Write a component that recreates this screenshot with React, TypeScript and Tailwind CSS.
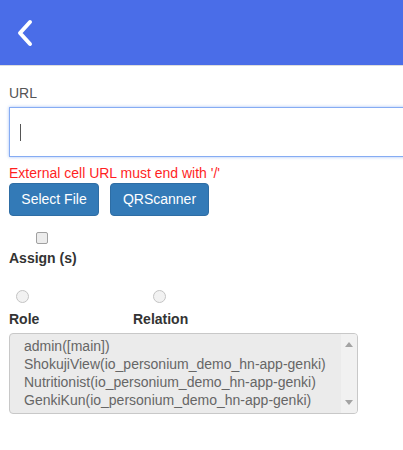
import React from 'react';

const roles = [
    'admin([main])',
    'ShokujiView(io_personium_demo_hn-app-genki)',
    'Nutritionist(io_personium_demo_hn-app-genki)',
    'GenkiKun(io_personium_demo_hn-app-genki)',
];

export default function App() {
    return (
        <div className="w-[403px] h-[450px] overflow-hidden bg-white font-['Liberation_Sans',Arial,sans-serif] text-[14px] text-[#333]">
            <div className="h-[66px] bg-[#4a6de8] border-b border-[#dddddd] flex items-center pl-[16px]">
                <svg width="20" height="28" viewBox="0 0 20 28" className="mt-[1px]">
                    <path d="M14 3 L4 14 L14 25" fill="none" stroke="white" strokeWidth="4" strokeLinecap="round" strokeLinejoin="round" />
                </svg>
            </div>

            <div className="pl-[9px]">
                <div className="mt-[17px] leading-[20px] text-[#555]">URL</div>

                <div className="mt-[4px] w-[420px] h-[50px] border border-[#86acf3] shadow-[0_0_3px_rgba(102,150,240,0.6)] flex items-center pl-[10px]">
                    <div className="w-px h-[17px] bg-[#555]" />
                </div>

                <div className="mt-[6px] leading-[20px] text-[#ff1f1f]">External cell URL must end with '/'</div>

                <div className="flex gap-[11px]">
                    <button className="h-[33px] w-[90px] rounded-[4px] bg-[#337ab7] border border-[#2e6da4] text-white text-[14px]">Select File</button>
                    <button className="h-[33px] w-[99px] rounded-[4px] bg-[#337ab7] border border-[#2e6da4] text-white text-[14px]">QRScanner</button>
                </div>

                <div className="mt-[16px] ml-[27px] w-[12px] h-[12px] rounded-[2px] border border-[#a0a0a0] bg-[#ececec]" />
                <div className="mt-[4px] leading-[20px] font-bold">Assign (s)</div>

                <div className="mt-[22px] flex">
                    <div className="w-[124px]">
                        <div className="ml-[7px] w-[13px] h-[13px] rounded-full border border-[#c4c4c4] bg-[#f2f2f2]" />
                        <div className="mt-[6px] leading-[20px] font-bold">Role</div>
                    </div>
                    <div>
                        <div className="ml-[20px] w-[13px] h-[13px] rounded-full border border-[#c4c4c4] bg-[#f2f2f2]" />
                        <div className="mt-[6px] leading-[20px] font-bold">Relation</div>
                    </div>
                </div>

                <div className="mt-[4px] w-[349px] h-[81px] rounded-[4px] border border-[#c8c8c8] bg-[#ebebeb] flex overflow-hidden">
                    <div className="flex-1 pt-[3px] pl-[14px] leading-[18px] text-[#666] whitespace-nowrap">
                        {roles.map((r) => (
                            <div key={r}>{r}</div>
                        ))}
                    </div>
                    <div className="w-[16px] bg-[#f1f1f1] flex flex-col items-center justify-between py-[8px]">
                        <svg width="8" height="5" viewBox="0 0 8 5"><path d="M4 0 L8 5 L0 5 Z" fill="#a3a3a3" /></svg>
                        <svg width="8" height="5" viewBox="0 0 8 5"><path d="M0 0 L8 0 L4 5 Z" fill="#a3a3a3" /></svg>
                    </div>
                </div>
            </div>
        </div>
    );
}
